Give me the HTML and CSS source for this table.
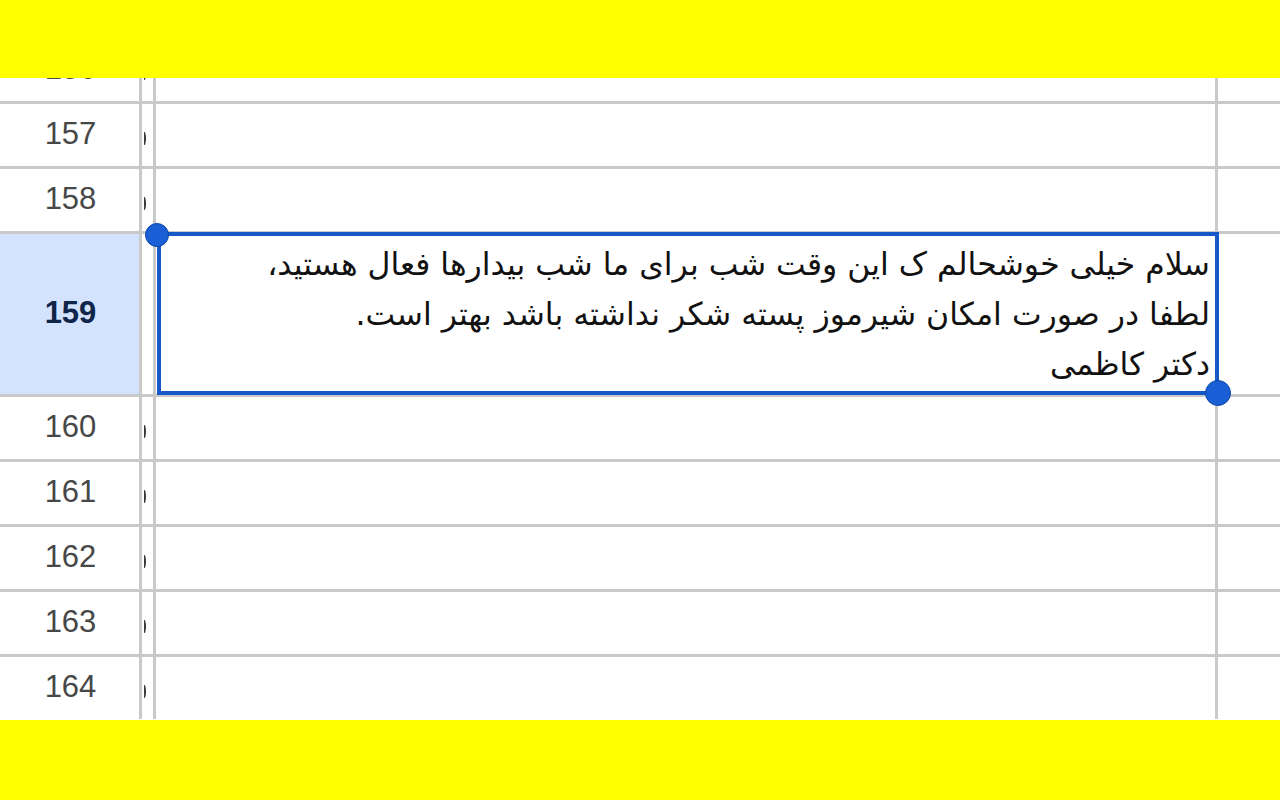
FILE: index.html
```html
<!DOCTYPE html>
<html lang="fa">
<head>
<meta charset="utf-8">
<link rel="stylesheet" href="styles.css">
</head>
<body>
<div class="band"></div>
<div class="sheet">
  <div class="rows">
    <div class="row first">
      <div class="hdr">156</div><div class="gap"><span class="tick"></span></div><div class="cell"></div><div class="cell2"></div>
    </div>
    <div class="row">
      <div class="hdr">157</div><div class="gap"><span class="tick"></span></div><div class="cell"></div><div class="cell2"></div>
    </div>
    <div class="row">
      <div class="hdr">158</div><div class="gap"><span class="tick"></span></div><div class="cell"></div><div class="cell2"></div>
    </div>
    <div class="row tall">
      <div class="hdr sel">159</div><div class="gap"></div><div class="cell"></div><div class="cell2"></div>
      <div class="selection">
        <div class="text" dir="rtl">سلام خیلی خوشحالم ک این وقت شب برای ما شب بیدارها فعال هستید،<br>لطفا در صورت امکان شیرموز پسته شکر نداشته باشد بهتر است.<br>دکتر کاظمی</div>
        <span class="handle tl"></span>
        <span class="handle br"></span>
      </div>
    </div>
    <div class="row">
      <div class="hdr">160</div><div class="gap"><span class="tick"></span></div><div class="cell"></div><div class="cell2"></div>
    </div>
    <div class="row">
      <div class="hdr">161</div><div class="gap"><span class="tick"></span></div><div class="cell"></div><div class="cell2"></div>
    </div>
    <div class="row">
      <div class="hdr">162</div><div class="gap"><span class="tick"></span></div><div class="cell"></div><div class="cell2"></div>
    </div>
    <div class="row">
      <div class="hdr">163</div><div class="gap"><span class="tick"></span></div><div class="cell"></div><div class="cell2"></div>
    </div>
    <div class="row">
      <div class="hdr">164</div><div class="gap"><span class="tick"></span></div><div class="cell"></div><div class="cell2"></div>
    </div>
  </div>
</div>
<div class="band bottom"></div>
</body>
</html>
```

FILE: styles.css
```css
* { box-sizing: border-box; }
html, body { margin: 0; padding: 0; }
body {
  width: 1280px;
  height: 800px;
  overflow: hidden;
  background: #ffffff;
  font-family: "Liberation Sans", Arial, sans-serif;
}
.band {
  height: 78px;
  background: #ffff00;
}
.band.bottom {
  height: 80px;
}
.sheet {
  height: 642px;
  overflow: hidden;
  background: #ffffff;
}
.rows {
  margin-top: -42px;
}
.row {
  position: relative;
  display: flex;
  height: 65px;
  border-top: 3px solid #c9c9c9;
}
.row.tall {
  height: 163px;
}
.hdr {
  width: 142px;
  border-right: 3px solid #c9c9c9;
  display: flex;
  align-items: center;
  justify-content: center;
  padding-left: 2px;
  padding-bottom: 3px;
  font-size: 31px;
  color: #474747;
}
.hdr.sel {
  background: #d3e3fd;
  color: #0f2549;
  font-weight: bold;
}
.gap {
  width: 14px;
  border-right: 3px solid #c9c9c9;
  display: flex;
  align-items: center;
}
.tick {
  display: block;
  width: 3px;
  height: 13px;
  margin-left: 1px;
  margin-top: 6px;
  border-right: 2px solid #3a3a3a;
  border-radius: 0 50% 50% 0;
}
.cell {
  width: 1062px;
  border-right: 3px solid #c9c9c9;
}
.cell2 {
  flex: 1;
}
.selection {
  position: absolute;
  z-index: 2;
  left: 157px;
  top: -2px;
  width: 1062px;
  height: 163px;
  border: 4px solid #1658c8;
}
.text {
  padding: 3px 5px 0 0;
  font-family: "DejaVu Sans", sans-serif;
  font-size: 31.5px;
  line-height: 50px;
  color: #111111;
  text-align: right;
}
.handle {
  position: absolute;
  border-radius: 50%;
  background: #1a5fd6;
  border: 1px solid #0d47a8;
}
.handle.tl {
  width: 24px;
  height: 24px;
  left: -16px;
  top: -13px;
}
.handle.br {
  width: 26px;
  height: 26px;
  right: -16px;
  bottom: -15px;
}
```
